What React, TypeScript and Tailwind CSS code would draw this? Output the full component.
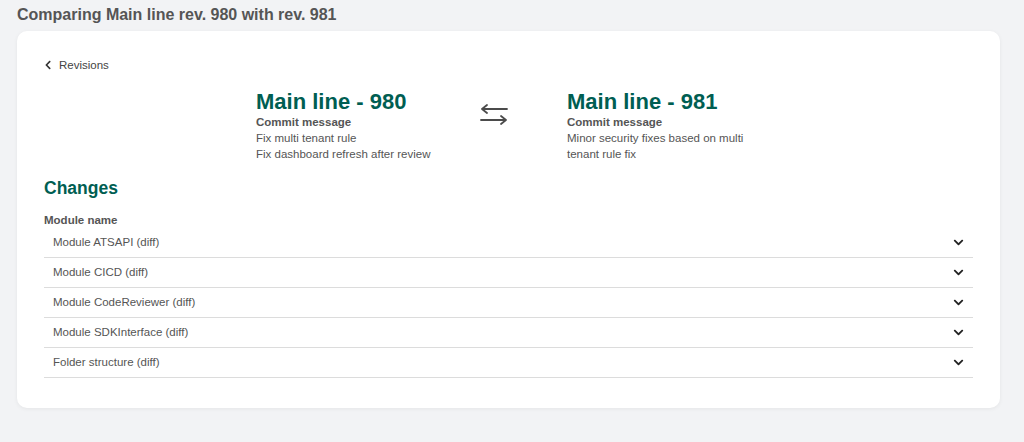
import { FaChevronDown, FaChevronLeft } from 'react-icons/fa';

const modules = [
  'Module ATSAPI (diff)',
  'Module CICD (diff)',
  'Module CodeReviewer (diff)',
  'Module SDKInterface (diff)',
  'Folder structure (diff)',
];

function SwapArrows() {
  return (
    <svg width="30" height="22" viewBox="0 0 30 22" fill="none" stroke="#4b4b4b" strokeWidth="1.8" strokeLinecap="round" strokeLinejoin="round">
      <path d="M28 5H3M8 1L3 5l5 4" />
      <path d="M2 16h25M22 12l5 4-5 4" />
    </svg>
  );
}

export default function App() {
  return (
    <div
      className="min-h-screen w-full bg-[#f2f3f5] pl-[17px] pr-[24px] pt-[6px] pb-[35px] text-[#555]"
      style={{ fontFamily: '"Liberation Sans", Arial, sans-serif' }}
    >
      {/* Page title */}
      <h1 className="text-[16px] leading-[18px] font-bold text-[#555]">
        Comparing Main line rev. 980 with rev. 981
      </h1>

      <div className="mt-[7px] rounded-[10px] bg-white px-[27px] pt-[26px] pb-[30px] shadow-[0_1px_4px_rgba(0,0,0,0.06)]">
        {/* Back link */}
        <div className="-ml-[1px] flex items-center gap-[6px] text-[11.5px] leading-[16px] text-[#444]">
          <FaChevronLeft size={10} className="text-[#333]" />
          <span>Revisions</span>
        </div>

        {/* Revisions compared */}
        <div className="mt-[17px] flex">
          <div className="ml-[212px] w-[223px]">
            <div className="text-[22px] leading-[24px] font-bold text-[#005e52]">Main line - 980</div>
            <div className="text-[11.5px] leading-[16px] font-bold text-[#555]">Commit message</div>
            <div className="text-[11.5px] leading-[16px]">Fix multi tenant rule</div>
            <div className="text-[11.5px] leading-[16px]">Fix dashboard refresh after review</div>
          </div>
          <div className="mt-[14px] w-[30px]">
            <SwapArrows />
          </div>
          <div className="ml-[58px] w-[190px]">
            <div className="text-[22px] leading-[24px] font-bold text-[#005e52]">Main line - 981</div>
            <div className="text-[11.5px] leading-[16px] font-bold text-[#555]">Commit message</div>
            <div className="text-[11.5px] leading-[16px]">Minor security fixes based on multi tenant rule fix</div>
          </div>
        </div>

        {/* Changes */}
        <h2 className="mt-[14px] text-[17.5px] leading-[24px] font-bold text-[#005e52]">Changes</h2>
        <div className="mt-[12px] text-[11.5px] leading-[16px] font-bold text-[#555]">Module name</div>
        <div>
          {modules.map((m) => (
            <div
              key={m}
              className="flex h-[30px] items-center justify-between border-b border-[#dcdcdc] pr-[9px] pl-[9px] text-[11.5px]"
            >
              <span>{m}</span>
              <FaChevronDown size={11} className="text-[#222]" />
            </div>
          ))}
        </div>
      </div>
    </div>
  );
}
